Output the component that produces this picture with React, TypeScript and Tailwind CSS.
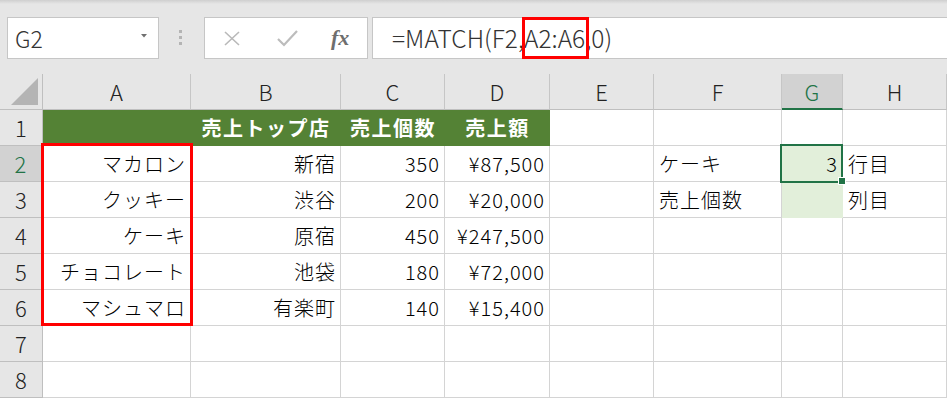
import React from "react";

const GRID = "grid grid-cols-[43px_148px_150px_104px_105px_104px_128px_61px_1fr]";
const FONT = "font-['Noto_Sans_CJK_JP','Noto_Sans',sans-serif]";

const columns = ["A", "B", "C", "D", "E", "F", "G", "H"];

const rows: string[][] = [
  ["", "売上トップ店", "売上個数", "売上額", "", "", "", ""],
  ["マカロン", "新宿", "350", "¥87,500", "", "ケーキ", "3", "行目"],
  ["クッキー", "渋谷", "200", "¥20,000", "", "売上個数", "", "列目"],
  ["ケーキ", "原宿", "450", "¥247,500", "", "", "", ""],
  ["チョコレート", "池袋", "180", "¥72,000", "", "", "", ""],
  ["マシュマロ", "有楽町", "140", "¥15,400", "", "", "", ""],
  ["", "", "", "", "", "", "", ""],
  ["", "", "", "", "", "", "", ""],
];

function Toolbar() {
  return (
    <div className="relative h-[74px] bg-[#e6e6e6]">
      <div className="h-[4px] bg-gradient-to-b from-[#cfcfcf] to-[#e6e6e6]" />
      {/* name box */}
      <div className="absolute left-[7px] top-[17px] flex h-[42px] w-[152px] items-center justify-between border border-[#c6c6c6] bg-white pl-[7px] pr-[11px]">
        <span className="text-[23px] font-light leading-none text-[#333]">G2</span>
        <svg width="6" height="4" viewBox="0 0 6 4" className="mt-[-4px]">
          <path d="M0 0 L6 0 L3 3.5 Z" fill="#707070" />
        </svg>
      </div>
      {/* grip */}
      <div className="absolute left-[179px] top-[30px] flex flex-col gap-[3px]">
        <span className="h-[3px] w-[3px] bg-[#b4b4b4]" />
        <span className="h-[3px] w-[3px] bg-[#b4b4b4]" />
        <span className="h-[3px] w-[3px] bg-[#b4b4b4]" />
      </div>
      {/* cancel / enter / fx */}
      <div className="absolute left-[204px] top-[17px] flex h-[42px] w-[164px] items-center border border-[#c6c6c6] bg-white">
        <svg width="18" height="15" viewBox="0 0 18 15" className="ml-[18px]">
          <path d="M2 1 L16 14 M16 1 L2 14" stroke="#b9b9b9" strokeWidth="1.6" fill="none" />
        </svg>
        <svg width="21" height="17" viewBox="0 0 21 17" className="ml-[36px]">
          <path d="M1 9 L7 15 L20 1" stroke="#bcbcbc" strokeWidth="2.2" fill="none" />
        </svg>
        <span className="ml-[33px] font-['Liberation_Serif',serif] text-[22px] font-bold italic leading-none text-[#6e6e6e]">
          fx
        </span>
      </div>
      {/* formula bar */}
      <div className="absolute left-[372px] right-[-2px] top-[17px] flex h-[42px] items-stretch border border-[#c6c6c6] bg-white pl-[19px] text-[24.5px] font-light leading-none text-[#333]">
        <span className="flex items-center">=MATCH(F2,</span>
        <span className="relative flex items-center">
          A2:A6
          <span className="absolute -bottom-px -left-[2px] -right-[4px] -top-px border-[3px] border-[#ff0000]" />
        </span>
        <span className="flex items-center">,0)</span>
      </div>
    </div>
  );
}

function Sheet() {
  return (
    <div className="relative">
      {/* column headers */}
      <div className={GRID}>
        <div className="relative h-[36px] border-b border-r border-[#bfbfbf] bg-[#e6e6e6]">
          <svg width="28" height="28" viewBox="0 0 28 28" className="absolute bottom-[3px] right-[3px]">
            <path d="M27 0 L27 27 L0 27 Z" fill="#b4b4b4" />
          </svg>
        </div>
        {columns.map((c) => {
          const sel = c === "G";
          return (
            <div
              key={c}
              className={`flex h-[36px] items-center justify-center border-r border-[#c6c6c6] text-[22px] font-light ${
                sel
                  ? "border-b-2 border-b-[#217346] bg-[#d2d2d2] text-[#217346]"
                  : "border-b border-b-[#bfbfbf] bg-[#e6e6e6] text-[#222]"
              }`}
            >
              {c}
            </div>
          );
        })}
      </div>

      {/* rows */}
      {rows.map((r, ri) => {
        const n = ri + 1;
        const selRow = n === 2;
        return (
          <div key={n} className={GRID}>
            <div
              className={`flex h-[36px] items-center justify-center border-b border-[#bfbfbf] text-[22px] font-light ${
                selRow
                  ? "border-r-2 border-r-[#217346] bg-[#d2d2d2] text-[#217346]"
                  : "border-r border-r-[#bfbfbf] bg-[#e6e6e6] text-[#222]"
              }`}
            >
              {n}
            </div>
            {r.map((v, ci) => {
              const head = n === 1 && ci < 4;
              const green = ci === 6 && (n === 2 || n === 3);
              const align = head
                ? "justify-center tracking-[1.5px]"
                : ci === 5 || ci === 7
                ? "justify-start tracking-[1px]"
                : "justify-end tracking-[1px]";
              return (
                <div
                  key={ci}
                  className={`flex h-[36px] items-center overflow-visible whitespace-nowrap pl-[5px] pr-[4px] text-[20px] ${align} ${
                    head
                      ? "border-b border-r border-[#548235] bg-[#548235] font-bold text-white"
                      : green
                      ? "border-b border-r border-[#e2efda] bg-[#e2efda] font-light text-black"
                      : "border-b border-r border-[#d4d4d4] bg-white font-light text-black"
                  } ${ci === 7 ? "pl-[3px]" : ""}`}
                >
                  {v}
                </div>
              );
            })}
          </div>
        );
      })}

      {/* red highlight around A2:A6 */}
      <div className="absolute left-[41px] top-[69px] h-[183px] w-[152px] border-[3px] border-[#ff0000]" />
      {/* active cell G2 */}
      <div className="absolute left-[780px] top-[70px] h-[39px] w-[63px] border-2 border-[#217346]" />
      <div className="absolute left-[838px] top-[103px] h-[8px] w-[8px] border border-white bg-[#217346]" />
    </div>
  );
}

export default function App() {
  return (
    <div className={`h-[398px] w-[947px] overflow-hidden bg-white ${FONT}`}>
      <Toolbar />
      <Sheet />
    </div>
  );
}
